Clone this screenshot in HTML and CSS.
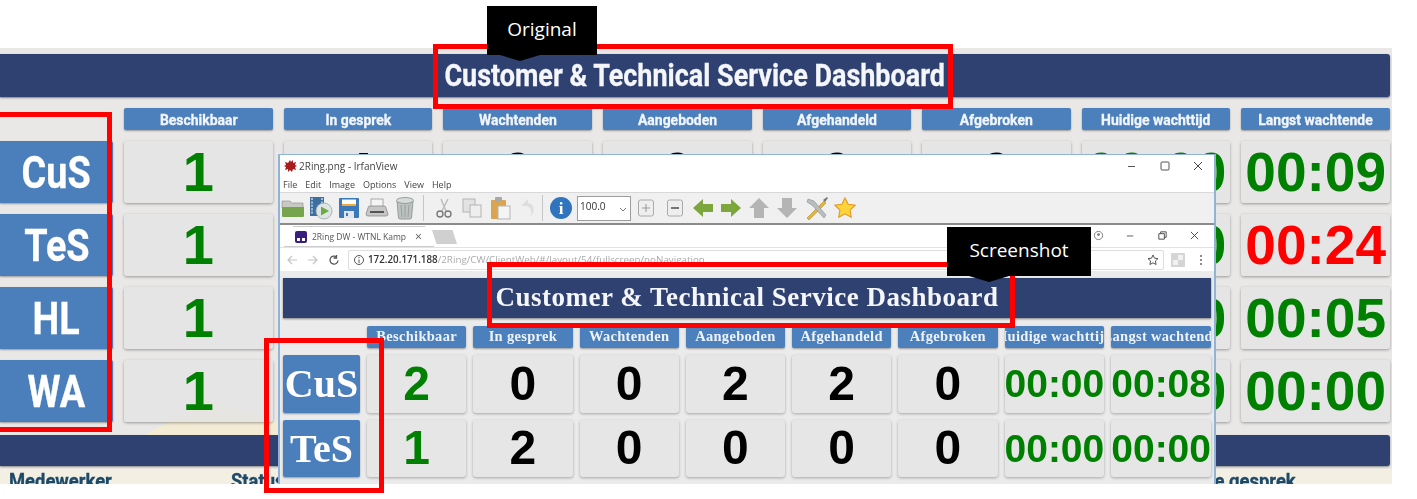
FILE: index.html
```html
<!DOCTYPE html>
<html lang="nl">
<head>
<meta charset="utf-8">
<title>Customer &amp; Technical Service Dashboard</title>
<link rel="stylesheet" href="styles.css">
</head>
<body>
<main class="dash">
  <h1 class="dash-title"><span class="cond title-text">Customer &amp; Technical Service Dashboard</span></h1>
  <section class="board">
    <div class="corner"></div>
    <div class="head"><span class="cond">Beschikbaar</span></div>
    <div class="head"><span class="cond">In gesprek</span></div>
    <div class="head"><span class="cond">Wachtenden</span></div>
    <div class="head"><span class="cond">Aangeboden</span></div>
    <div class="head"><span class="cond">Afgehandeld</span></div>
    <div class="head"><span class="cond">Afgebroken</span></div>
    <div class="head"><span class="cond">Huidige wachttijd</span></div>
    <div class="head"><span class="cond">Langst wachtende</span></div>

    <div class="label"><span class="cond">CuS</span></div>
    <div class="cell ok">1</div><div class="cell">4</div><div class="cell">0</div><div class="cell">0</div><div class="cell">0</div><div class="cell">0</div><div class="cell time ok">00:00</div><div class="cell time ok">00:09</div>

    <div class="label"><span class="cond">TeS</span></div>
    <div class="cell ok">1</div><div class="cell">2</div><div class="cell">0</div><div class="cell">0</div><div class="cell">0</div><div class="cell">0</div><div class="cell time ok">00:00</div><div class="cell time alert">00:24</div>

    <div class="label"><span class="cond">HL</span></div>
    <div class="cell ok">1</div><div class="cell">0</div><div class="cell">0</div><div class="cell">0</div><div class="cell">0</div><div class="cell">0</div><div class="cell time ok">00:00</div><div class="cell time ok">00:05</div>

    <div class="label"><span class="cond">WA</span></div>
    <div class="cell ok">1</div><div class="cell">0</div><div class="cell">0</div><div class="cell">0</div><div class="cell">0</div><div class="cell">0</div><div class="cell time ok">00:00</div><div class="cell time ok">00:00</div>
  </section>
  <div class="subbar"></div>
  <div class="agents">
    <span class="cond agent-a">Medewerker</span>
    <span class="cond agent-b">Status</span>
    <span class="cond agent-c">Laatste gesprek</span>
  </div>
</main>

<section class="viewer">
  <header class="viewer-title">
    <svg class="splat" viewBox="0 0 14 12"><path d="M7 0l1 2 2-2 0 3 3-1-1 3 2 1-2 1 1 3-3-1-1 3-2-2-2 2 0-3-3 1 1-3-2-1 2-1-1-3 3 1z" fill="#a81c1c"/></svg>
    <span class="viewer-name">2Ring.png - IrfanView</span>
    <span class="win-btns">
      <svg viewBox="0 0 12 12"><path d="M2 6.500h7" stroke="#555" fill="none"/></svg>
      <svg viewBox="0 0 12 12"><rect x="2" y="2" width="8" height="8" rx="1" stroke="#555" fill="none"/></svg>
      <svg viewBox="0 0 12 12"><path d="M2 2l8 8M10 2l-8 8" stroke="#444" fill="none"/></svg>
    </span>
  </header>
  <nav class="viewer-menu"><span>File</span><span>Edit</span><span>Image</span><span>Options</span><span>View</span><span>Help</span></nav>
  <div class="tools">
    <svg class="tool" viewBox="0 0 24 24"><path d="M1 5h8l2 2h11v5H1z" fill="#c9c9c4" stroke="#8a8a86" stroke-width=".6"/><path d="M1 11h22v9a1 1 0 0 1-1 1H2a1 1 0 0 1-1-1z" fill="#77a54d"/></svg>
    <svg class="tool" viewBox="0 0 24 24"><rect x="1" y="1" width="14" height="19" fill="#3f6f9f"/><path d="M3 2v17M13 2v17" stroke="#cfe0ee" stroke-width="1.4" stroke-dasharray="2 1.4"/><circle cx="15" cy="15" r="8" fill="#dfe5e4" stroke="#9aa" stroke-width=".8"/><path d="M12 10.500l8 4.500-8 4.500z" fill="#6caa45"/></svg>
    <svg class="tool" viewBox="0 0 24 24"><rect x="2" y="2" width="20" height="20" rx="1" fill="#3c79b8"/><rect x="5" y="3" width="14" height="7" fill="#f3a83a"/><rect x="5" y="4" width="14" height="4" fill="#fff"/><rect x="7" y="15" width="10" height="7" fill="#dfe6ee"/><rect x="9" y="17" width="2" height="3" fill="#3c79b8"/></svg>
    <svg class="tool" viewBox="0 0 24 24"><rect x="6" y="3" width="12" height="8" fill="#f4f4f4" stroke="#999" stroke-width=".8"/><path d="M3 12q0-2 2-2h14q2 0 2 2l2 6q0 2-2 2H3q-2 0-2-2z" fill="#c6c6c6" stroke="#8c8c8c" stroke-width=".8"/><rect x="5" y="15" width="14" height="2" fill="#555"/></svg>
    <svg class="tool" viewBox="0 0 24 24"><path d="M4 5h16l-1.500 17q-.2 1-2 1h-9q-1.800 0-2-1z" fill="#bcc3c1" stroke="#868d8b" stroke-width=".8"/><ellipse cx="12" cy="4.500" rx="8.500" ry="3" fill="#d6dad8" stroke="#868d8b" stroke-width=".8"/><path d="M8 9l1 12M12 9v12M16 9l-1 12" stroke="#8f9694" stroke-width=".8"/></svg>
    <i class="tool-sep"></i>
    <svg class="tool faded" viewBox="0 0 24 24"><path d="M9 3l5 12M16 3l-6 12" stroke="#b5b5b5" stroke-width="1.500" fill="none"/><circle cx="8" cy="18" r="3" fill="none" stroke="#666" stroke-width="1.400"/><circle cx="16" cy="18" r="3" fill="none" stroke="#666" stroke-width="1.400"/></svg>
    <svg class="tool faded" viewBox="0 0 24 24"><rect x="3" y="3" width="12" height="13" fill="#e0e0e0" stroke="#aaa"/><rect x="10" y="9" width="11" height="12" fill="#eee" stroke="#aaa"/></svg>
    <svg class="tool" viewBox="0 0 24 24"><rect x="3" y="4" width="15" height="19" rx="1" fill="#d9a550"/><rect x="7" y="1" width="7" height="5" rx="1" fill="#a9a9a9"/><rect x="10" y="10" width="12" height="13" fill="#f4f4f4" stroke="#b5b5b5"/></svg>
    <svg class="tool faded" viewBox="0 0 24 24"><path d="M12 3L5 10h4c5 0 7 3 6 10 4-4 4-12-3-13z" fill="#dcdcdc"/></svg>
    <i class="tool-sep tool-sep-b"></i>
    <svg class="tool info" viewBox="0 0 24 24"><circle cx="12" cy="12" r="11" fill="#2f74bd"/><text x="12" y="18" text-anchor="middle" class="info-i">i</text></svg>
    <div class="combo"><span>100.0</span><svg viewBox="0 0 8 8"><path d="M1 3l3 3 3-3" stroke="#777" fill="none"/></svg></div>
    <svg class="tool mini" viewBox="0 0 16 20"><rect x=".5" y="2" width="15" height="16" rx="2" fill="#eee" stroke="#aaa"/><path d="M8 6v8M4 10h8" stroke="#999" fill="none"/></svg>
    <svg class="tool mini gap-m" viewBox="0 0 16 20"><rect x=".5" y="2" width="15" height="16" rx="2" fill="#eee" stroke="#aaa"/><path d="M4 10h8" stroke="#777" stroke-width="2" fill="none"/></svg>
    <svg class="tool arrow" viewBox="0 0 20 20"><path d="M10 1L0 10l10 9v-5h10V6H10z" fill="#7da63c"/></svg>
    <svg class="tool arrow" viewBox="0 0 20 20"><path d="M10 1l10 9-10 9v-5H0V6h10z" fill="#7da63c"/></svg>
    <svg class="tool arrow" viewBox="0 0 20 20"><path d="M10 0l10 10h-5v10H5V10H0z" fill="#b4b4b4"/></svg>
    <svg class="tool arrow" viewBox="0 0 20 20"><path d="M10 20L0 10h5V0h10v10h5z" fill="#b4b4b4"/></svg>
    <svg class="tool" viewBox="0 0 24 24"><path d="M2 22L19 5l2 2L4 24z" fill="#e3b53c" stroke="#a8811f" stroke-width=".5"/><path d="M22 1l-4 3 2 2 3-4z" fill="#777"/><path d="M3 3l6 2 12 14-2 3L7 9 2 6z" fill="#b9bdc0" stroke="#7c8082" stroke-width=".5"/></svg>
    <svg class="tool star" viewBox="0 0 24 24"><path d="M12 1l3.400 7 7.600 1-5.500 5.300 1.300 7.700-6.800-3.600L5.200 22l1.300-7.700L1 9l7.600-1z" fill="#ffd43a" stroke="#e09a20" stroke-width="1.200"/></svg>
  </div>

  <div class="chrome-tabs">
    <div class="tab">
      <svg class="favicon" viewBox="0 0 12 12"><rect width="12" height="12" rx="2" fill="#3a1e7c"/><rect x="2" y="7" width="3" height="3" fill="#fff"/><rect x="7" y="7" width="3" height="3" fill="#fff"/></svg>
      <span class="tab-name">2Ring DW - WTNL Kamp</span>
      <span class="tab-x">×</span>
    </div>
    <i class="new-tab"></i>
    <span class="win-btns chrome-btns">
      <svg class="profile" viewBox="0 0 12 12"><circle cx="6" cy="6" r="4.500" stroke="#777" fill="none"/><circle cx="6" cy="5" r="1.500" fill="#777"/></svg>
      <svg viewBox="0 0 12 12"><path d="M2 6.500h7" stroke="#555" fill="none"/></svg>
      <svg viewBox="0 0 12 12"><path d="M2 4h6v6H2zM4 4V2h6v6H8" stroke="#444" fill="none"/></svg>
      <svg viewBox="0 0 12 12"><path d="M2 2l8 8M10 2l-8 8" stroke="#444" fill="none"/></svg>
    </span>
  </div>
  <div class="chrome-bar">
    <svg class="nav-ico" viewBox="0 0 12 12"><path d="M11 6H2M6 2L2 6l4 4" stroke="#c4c4c4" stroke-width="1.200" fill="none"/></svg>
    <svg class="nav-ico" viewBox="0 0 12 12"><path d="M1 6h9M6 2l4 4-4 4" stroke="#c4c4c4" stroke-width="1.200" fill="none"/></svg>
    <svg class="nav-ico" viewBox="0 0 12 12"><path d="M10 6.500A4 4 0 1 1 8.500 3M8.500 1v3h-3" stroke="#555" stroke-width="1.300" fill="none"/></svg>
    <div class="omnibox">
      <svg class="omni-info" viewBox="0 0 12 12"><circle cx="6" cy="6" r="4.500" stroke="#555" fill="none"/><path d="M6 5.500V9M6 3v1.200" stroke="#555" fill="none"/></svg>
      <span class="url-host">172.20.171.188</span><span class="url-path">/2Ring/CW/ClientWeb/#/layout/54/fullscreen/noNavigation</span>
      <svg class="omni-star" viewBox="0 0 12 12"><path d="M6 1l1.500 3.200 3.500.4-2.600 2.400.7 3.500L6 8.800 2.900 10.500l.7-3.500L1 4.600l3.500-.4z" stroke="#555" fill="none"/></svg>
    </div>
    <svg class="ext-ico" viewBox="0 0 14 14"><rect width="14" height="14" rx="1" fill="#d5d5d5"/><rect x="7" y="2" width="5" height="5" fill="#f1f1f1"/><rect x="2" y="7" width="5" height="5" fill="#f1f1f1"/></svg>
    <svg class="kebab" viewBox="0 0 4 12"><circle cx="2" cy="2" r="1" fill="#666"/><circle cx="2" cy="6" r="1" fill="#666"/><circle cx="2" cy="10" r="1" fill="#666"/></svg>
  </div>

  <div class="mini-dash">
    <h2 class="mini-title">Customer &amp; Technical Service Dashboard</h2>
    <section class="mini-board">
      <div class="corner"></div>
      <div class="mini-head"><span>Beschikbaar</span></div>
      <div class="mini-head"><span>In gesprek</span></div>
      <div class="mini-head"><span>Wachtenden</span></div>
      <div class="mini-head"><span>Aangeboden</span></div>
      <div class="mini-head"><span>Afgehandeld</span></div>
      <div class="mini-head"><span>Afgebroken</span></div>
      <div class="mini-head"><span>Huidige wachttijd</span></div>
      <div class="mini-head"><span>Langst wachtende</span></div>

      <div class="mini-label">CuS</div>
      <div class="mini-cell ok">2</div><div class="mini-cell">0</div><div class="mini-cell">0</div><div class="mini-cell">2</div><div class="mini-cell">2</div><div class="mini-cell">0</div><div class="mini-cell mini-time ok">00:00</div><div class="mini-cell mini-time ok">00:08</div>

      <div class="mini-label">TeS</div>
      <div class="mini-cell ok">1</div><div class="mini-cell">2</div><div class="mini-cell">0</div><div class="mini-cell">0</div><div class="mini-cell">0</div><div class="mini-cell">0</div><div class="mini-cell mini-time ok">00:00</div><div class="mini-cell mini-time ok">00:00</div>

      <div class="mini-label">HL</div>
    </section>
  </div>
</section>

<div class="mark mark-title"></div>
<div class="mark mark-labels"></div>
<div class="mark mark-mini-title"></div>
<div class="mark mark-mini-labels"></div>
<div class="callout callout-original">Original</div>
<div class="callout callout-shot">Screenshot</div>
</body>
</html>
```
FILE: styles.css
```css
* { box-sizing: border-box; }
html, body { margin: 0; padding: 0; }
body {
  width: 1417px;
  height: 499px;
  overflow: hidden;
  background: #fff;
  position: relative;
  padding-top: 48px;
  font-family: "Liberation Sans", Arial, sans-serif;
}

/* Outer dashboard */
.dash {
  position: relative;
  width: 1392px;
  height: 436px;
  overflow: hidden;
  padding: 6px 2px 0 0;
  background: #e9e8e6;
  filter: blur(.6px);
}
.dash::before {
  content: "";
  position: absolute;
  left: 120px;
  top: 352px;
  width: 180px;
  height: 48px;
  background: #f3ebd3;
  clip-path: polygon(50% 0, 100% 60%, 100% 100%, 0 100%);
}
.cond {
  display: inline-block;
  white-space: nowrap;
  font-family: Roboto, "Liberation Sans", sans-serif;
  font-weight: 700;
  transform: scaleX(.93);
  -webkit-text-stroke: .3px currentColor;
}
.dash-title {
  margin: 0;
  height: 43px;
  background: #2f4170;
  box-shadow: 0 1px 2px rgba(0,0,0,.45);
  border-radius: 0 3px 3px 0;
  display: flex;
  align-items: center;
  justify-content: center;
  color: #f4f6fa;
  position: relative;
}
.title-text { font-size: 31px; transform: scaleX(.87); }
.board {
  position: relative;
  margin-top: 11px;
  display: grid;
  grid-template-columns: 113px repeat(8, 1fr);
  grid-template-rows: 22px repeat(4, 62px);
  gap: 11px;
}
.head {
  background: #4b80bd;
  border-radius: 2px;
  box-shadow: 0 1px 2px rgba(0,0,0,.35);
  color: #f2f6fb;
  font-size: 15px;
  display: flex;
  align-items: center;
  justify-content: center;
  padding-top: 1px;
}
.label {
  background: #4a7fbc;
  border-radius: 0 2px 2px 0;
  box-shadow: 0 1px 2px rgba(0,0,0,.35);
  color: #fff;
  font-size: 45px;
  display: flex;
  align-items: center;
  justify-content: center;
}
.label .cond { transform: scaleX(.84); }
.cell {
  background: rgba(228,228,228,.85);
  border-radius: 3px;
  box-shadow: 0 1px 3px rgba(0,0,0,.35);
  font-size: 56px;
  font-weight: 700;
  color: #000;
  display: flex;
  align-items: center;
  justify-content: center;
  line-height: 1;
}
.time { font-size: 55px; }
.ok { color: #008000; }
.alert { color: #f00; }
.subbar {
  position: relative;
  margin-top: 13px;
  height: 31px;
  background: #2f4170;
  border-radius: 0 3px 3px 0;
  box-shadow: 0 1px 2px rgba(0,0,0,.4);
}
.agents {
  position: absolute;
  left: 0;
  right: 0;
  top: 421px;
  height: 24px;
  padding: 0 0 0 9px;
  display: flex;
  color: #1d4a68;
  font-size: 20px;
  background: #f3efe3;
}
.agents .cond { transform-origin: 0 50%; transform: scaleX(.92); }
.agent-b { margin-left: 110px; }
.agent-c { margin-left: auto; margin-right: 85px; }

/* IrfanView window */
.viewer {
  position: absolute;
  left: 278px;
  top: 154px;
  width: 938px;
  height: 330px;
  overflow: hidden;
  background: #fff;
  border: 1px solid #8fb4d8;
  border-width: 1px 2px 0;
  font-family: "Open Sans", "Liberation Sans", sans-serif;
  filter: blur(.35px);
}
.viewer-title {
  height: 22px;
  display: flex;
  align-items: center;
  padding-left: 3px;
  position: relative;
}
.splat { width: 14px; height: 12px; margin-right: 2px; }
.viewer-name { font-size: 10px; color: #444; }
.win-btns {
  margin-left: auto;
  display: flex;
  gap: 21px;
  padding-right: 10px;
}
.win-btns svg { width: 12px; height: 12px; }
.viewer-menu {
  height: 15px;
  display: flex;
  align-items: center;
  padding-left: 3px;
  gap: 8px;
  font-size: 9px;
  color: #444;
}
.tools {
  height: 33px;
  background: #f0f0f0;
  border-top: 1px solid #d8d8d8;
  border-bottom: 2px solid #8b8b8b;
  display: flex;
  align-items: center;
  padding-left: 1px;
  gap: 4px;
}
.tool { width: 24px; height: 24px; flex: none; }
.tool.faded { opacity: .85; }
.tool.mini { width: 16px; height: 20px; margin-left: 3px; }
.tool.gap-m { margin-left: 9px; margin-right: 6px; }
.tool.arrow { width: 20px; height: 20px; margin-right: 4px; }
.tool.star { width: 22px; height: 22px; margin-left: 1px; }
.tool-sep { width: 1px; height: 26px; background: #c6c6c6; margin: 0 4px 0 2px; }
.tool-sep-b { margin: 0 2px 0 -2px; }
.info-i { font: 700 17px "Liberation Serif", serif; fill: #fff; }
.combo {
  width: 54px;
  height: 25px;
  background: #fff;
  border: 1px solid #9c9c9c;
  font-size: 10px;
  color: #333;
  display: flex;
  align-items: center;
  justify-content: space-between;
  padding: 0 3px 4px 2px;
}
.combo svg { width: 8px; height: 8px; margin-top: 6px; }
.chrome-tabs {
  height: 22px;
  display: flex;
  align-items: flex-end;
  background: #fff;
  padding-left: 4px;
  position: relative;
}
.tab {
  width: 150px;
  height: 21px;
  display: flex;
  align-items: center;
  padding-left: 11px;
  background: #fff;
  clip-path: polygon(0 100%, 6% 0, 94% 0, 100% 100%);
  font-size: 8.500px;
  color: #555;
  box-shadow: inset 0 0 0 1px #ccc;
}
.favicon { width: 12px; height: 12px; flex: none; }
.tab-name { margin-left: 5px; width: 94px; overflow: hidden; white-space: nowrap; }
.tab-x { margin-left: 9px; font-size: 12px; color: #555; }
.new-tab {
  width: 25px;
  height: 14px;
  margin: 0 0 3px -2px;
  background: #d0d0d0;
  clip-path: polygon(0 0, 82% 0, 100% 100%, 18% 100%);
}
.chrome-btns { gap: 21px; padding: 0 14px 6px 0; }
.chrome-btns svg { width: 11px; height: 11px; }
.chrome-bar {
  height: 24px;
  display: flex;
  align-items: center;
  padding-left: 6px;
  background: #fff;
  border-top: 1px solid #e2e2e2;
}
.nav-ico { width: 12px; height: 12px; margin-right: 9px; flex: none; }
.omnibox {
  width: 816px;
  height: 20px;
  margin-left: -1px;
  border: 1px solid #dedede;
  border-radius: 2px;
  background: #fff;
  display: flex;
  align-items: center;
  padding: 0 4px;
  font-size: 9.800px;
  white-space: nowrap;
}
.omni-info { width: 12px; height: 12px; margin-right: 3px; }
.url-host { color: #333; font-weight: 600; }
.url-path { color: #aaa; }
.omni-star { width: 12px; height: 12px; margin-left: auto; }
.ext-ico { width: 14px; height: 14px; margin-left: 7px; }
.kebab { width: 4px; height: 12px; margin-left: 14px; }

/* Inner dashboard */
.mini-dash {
  height: 214px;
  overflow: hidden;
  padding: 7px 3px 0;
  background: #ebebeb;
}
.mini-title {
  margin: 0;
  height: 40px;
  padding-bottom: 2px;
  background: #2f4170;
  box-shadow: 0 1px 2px rgba(0,0,0,.45);
  color: #f4f6fa;
  font: 700 27px "Liberation Serif", serif;
  letter-spacing: .5px;
  display: flex;
  align-items: center;
  justify-content: center;
}
.mini-board {
  margin-top: 8px;
  display: grid;
  grid-template-columns: 77px repeat(8, 1fr);
  grid-template-rows: 22px 57.500px 57.500px 57.500px;
  gap: 7px;
}
.mini-head {
  background: #4b80bd;
  border-radius: 2px;
  box-shadow: 0 1px 2px rgba(0,0,0,.35);
  color: #eef3f9;
  font: 700 14.500px "Liberation Serif", serif;
  letter-spacing: .3px;
  white-space: nowrap;
  overflow: hidden;
  display: flex;
  align-items: center;
  justify-content: center;
  padding-bottom: 2px;
}
.mini-head span { flex: none; }
.mini-label {
  background: #4a7fbc;
  border-radius: 2px;
  box-shadow: 0 1px 2px rgba(0,0,0,.35);
  color: #fff;
  font: 700 40px "Liberation Serif", serif;
  display: flex;
  align-items: center;
  justify-content: center;
}
.mini-cell {
  background: #e6e6e6;
  border-radius: 3px;
  box-shadow: 0 1px 3px rgba(0,0,0,.3);
  font: 700 48px "Liberation Sans", Arial, sans-serif;
  color: #000;
  display: flex;
  align-items: center;
  justify-content: center;
  line-height: 1;
}
.mini-cell.ok { color: #008000; }
.mini-time { font-size: 39px; }

/* Annotations */
.mark {
  position: absolute;
  border: 5px solid #f00;
}
.mark-title { left: 433px; top: 44px; width: 520px; height: 65px; }
.mark-labels { left: -8px; top: 112px; width: 120px; height: 320px; }
.mark-mini-title { left: 487px; top: 262px; width: 528px; height: 66px; }
.mark-mini-labels { left: 264px; top: 338px; width: 120px; height: 155px; }
.callout {
  position: absolute;
  background: #000;
  color: #fff;
  font: 400 19px "Open Sans", "Noto Sans", sans-serif;
  display: flex;
  align-items: center;
  justify-content: center;
  height: 49px;
  padding-bottom: 3px;
}
.callout::after {
  content: "";
  position: absolute;
  top: 100%;
  width: 40px;
  height: 6px;
  background: #000;
  clip-path: polygon(0 0, 100% 0, 50% 100%);
}
.callout-original { left: 487px; top: 6px; width: 110px; }
.callout-original::after { left: 13px; }
.callout-shot { left: 947px; top: 227px; width: 144px; }
.callout-shot::after { left: 22px; }
```
